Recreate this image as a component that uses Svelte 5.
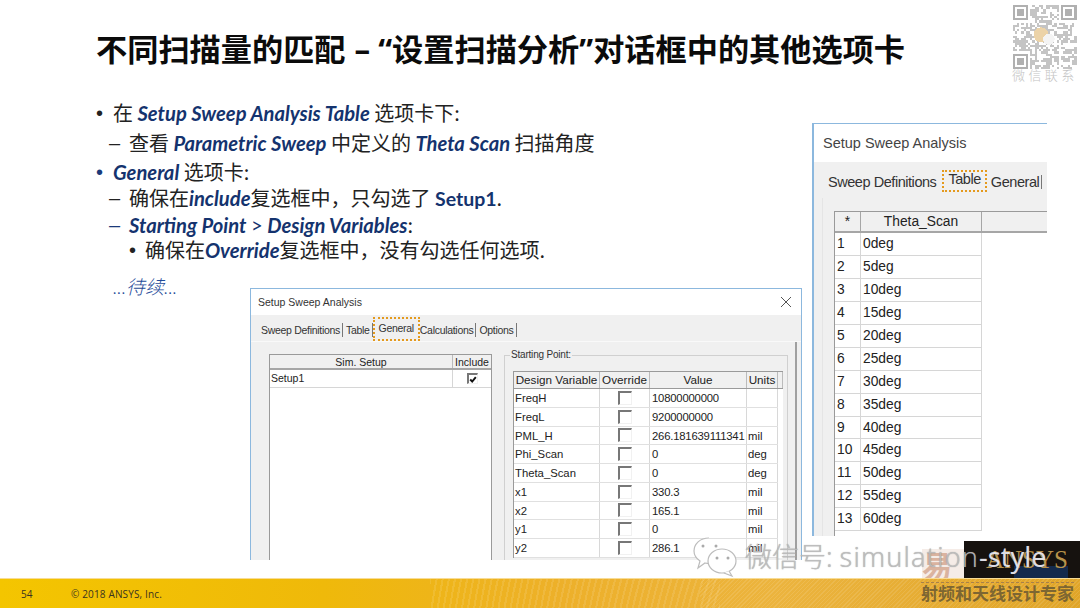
<script>
  const leftRows = [
    ['FreqH', '10800000000', ''],
    ['FreqL', '9200000000', ''],
    ['PML_H', '266.181639111341', 'mil'],
    ['Phi_Scan', '0', 'deg'],
    ['Theta_Scan', '0', 'deg'],
    ['x1', '330.3', 'mil'],
    ['x2', '165.1', 'mil'],
    ['y1', '0', 'mil'],
    ['y2', '286.1', 'mil']
  ];
  const angles = Array.from({ length: 13 }, (_, i) => ({ n: i + 1, a: i * 5 + 'deg' }));

  const QR = 29;
  const qrCells = [];
  let seed = 7;
  const rnd = () => ((seed = (seed * 16807) % 2147483647) / 2147483647);
  for (let y = 0; y < QR; y++) {
    for (let x = 0; x < QR; x++) {
      const inFinder = (x < 8 && y < 8) || (x >= QR - 8 && y < 8) || (x < 8 && y >= QR - 8);
      if (!inFinder && rnd() > 0.5) qrCells.push([x, y]);
    }
  }
  const finders = [[0, 0], [QR - 7, 0], [0, QR - 7]];
</script>

<div class="slide">
  <h1 class="title">不同扫描量的匹配<span class="lat gap">– “</span>设置扫描分析<span class="lat">”</span>对话框中的其他选项卡</h1>

  <div class="qr">
    <svg viewBox="0 0 29 29" width="65" height="64" shape-rendering="crispEdges">
      {#each qrCells as c}<rect x={c[0]} y={c[1]} width="1" height="1" fill="#c4c4c4" />{/each}
      {#each finders as f}
        <rect x={f[0] + 0.5} y={f[1] + 0.5} width="6" height="6" fill="none" stroke="#b0b0b0" />
        <rect x={f[0] + 2} y={f[1] + 2} width="3" height="3" fill="#b0b0b0" />
      {/each}
      <circle cx="13" cy="13.5" r="3.4" fill="#ecd3a8" />
      <circle cx="16.5" cy="15.5" r="2.6" fill="#f4f4f4" />
    </svg>
    <div class="qr-label">微信联系</div>
  </div>

  <ul class="bullets">
    <li class="l1"><span class="mark">•</span><span>在 <em>Setup Sweep Analysis Table</em> 选项卡下:</span></li>
    <li class="l2 g1"><span class="mark">–</span><span>查看 <em>Parametric Sweep</em> 中定义的 <em>Theta Scan</em> 扫描角度</span></li>
    <li class="l1 g2"><span class="mark blue">•</span><span><em>General</em> 选项卡:</span></li>
    <li class="l2"><span class="mark">–</span><span>确保在<em>include</em>复选框中，只勾选了 <b>Setup1</b>.</span></li>
    <li class="l2 g3"><span class="mark blue">–</span><span><em>Starting Point</em> <i class="gt">&gt;</i> <em>Design Variables</em>:</span></li>
    <li class="l3 g4"><span class="mark">•</span><span>确保在<em>Override</em>复选框中，没有勾选任何选项.</span></li>
  </ul>
  <div class="more"><span class="dots">...</span>待续<span class="dots">...</span></div>

  <section class="win win-left">
    <header class="win-title">
      <span>Setup Sweep Analysis</span>
      <svg class="close" viewBox="0 0 10 10" width="10" height="10"><path d="M0 0L10 10M10 0L0 10" stroke="#555" stroke-width="1" fill="none" /></svg>
    </header>
    <div class="win-body">
      <nav class="tabs">
        <span class="tab sep">Sweep Definitions</span>
        <span class="tab sep">Table</span>
        <span class="tab active">General</span>
        <span class="tab sep">Calculations</span>
        <span class="tab sep">Options</span>
      </nav>
      <div class="panel">
        <div class="sim">
          <div class="sim-head"><span class="sim-a">Sim. Setup</span><span class="sim-b">Include</span></div>
          <div class="sim-row">
            <span class="sim-a left">Setup1</span>
            <span class="sim-b"><span class="cb checked"><svg viewBox="0 0 10 10" width="9" height="9"><path d="M1.5 5L4 7.5L8.5 2" stroke="#111" stroke-width="2.4" fill="none" /></svg></span></span>
          </div>
        </div>
        <fieldset class="group">
          <legend>Starting Point:</legend>
          <div class="vars">
            <div class="vhead">
              <span class="c1">Design Variable</span><span class="c2">Override</span><span class="c3">Value</span><span class="c4">Units</span><span class="c5"></span>
            </div>
            {#each leftRows as r}
              <div class="vrow">
                <span class="c1 tl">{r[0]}</span>
                <span class="c2"><span class="cb"></span></span>
                <span class="c3 tl">{r[1]}</span>
                <span class="c4 tl">{r[2]}</span>
              </div>
            {/each}
          </div>
        </fieldset>
      </div>
    </div>
  </section>

  <section class="win win-right">
    <header class="win-title big"><span>Setup Sweep Analysis</span></header>
    <div class="win-body big">
      <nav class="tabs big">
        <span class="tab">Sweep Definitions</span>
        <span class="tab active">Table</span>
        <span class="tab sep">General</span>
      </nav>
      <div class="panel big">
        <div class="angles">
          <div class="ahead"><span class="a1">*</span><span class="a2">Theta_Scan</span><span class="a3"></span></div>
          {#each angles as r}
            <div class="arow"><span class="a1">{r.n}</span><span class="a2">{r.a}</span></div>
          {/each}
        </div>
      </div>
    </div>
  </section>

  <footer class="foot">
    <span class="page">54</span>
    <span class="copy">© 2018 ANSYS, Inc.</span>
    <span class="pro">射频和天线设计专家</span>
  </footer>

  <div class="logo"><span>ANSYS</span></div>

  <div class="stamp">易</div>

  <div class="wm">
    <svg class="wx" viewBox="0 0 48 44" width="48" height="44">
      <path d="M17 3C8 3 2 9 2 16c0 5 3 8 6 10l-2 7 7-5c2 .5 3 .5 5 .5" fill="#fff" stroke="#bcbcbc" stroke-width="1.2" />
      <ellipse cx="30" cy="26" rx="14" ry="12" fill="#fff" stroke="#bcbcbc" stroke-width="1.2" />
      <path d="M37 36l3 5-8-3" fill="#fff" stroke="#bcbcbc" stroke-width="1.2" />
      <circle cx="11" cy="11" r="1.5" fill="#aaa" /><circle cx="24" cy="11" r="1.5" fill="#aaa" />
      <circle cx="25" cy="23" r="1.5" fill="#aaa" /><circle cx="36" cy="23" r="1.5" fill="#aaa" />
    </svg>
    <span class="wm-text">微信号: <span class="wm-lat">simulation</span><span class="wm-light">-style</span></span>
  </div>
</div>

<style>
  :global(body) { margin: 0; }
  .slide {
    position: relative;
    width: 1080px;
    height: 608px;
    overflow: hidden;
    background: #fff;
    font-family: "Noto Sans CJK SC", sans-serif;
    color: #222;
  }
  .title {
    margin: 0;
    padding: 27px 0 0 96px;
    font-size: 31.2px;
    line-height: 42px;
    font-weight: 700;
    color: #0b0b0b;
    white-space: pre;
  }
  .lat { font-family: "Noto Sans", sans-serif; }
  .gap { margin-left: 9px; }
  .bullets {
    list-style: none;
    margin: 0;
    padding: 30px 0 0 96px;
    font-size: 20px;
    line-height: 26px;
  }
  .bullets li { display: flex; white-space: nowrap; height: 26px; }
  .l2 { padding-left: 13px; }
  .l3 { padding-left: 33px; }
  .g1 { margin-top: 4px; }
  .g2 { margin-top: 3px; }
  .g3 { margin-top: 1px; }
  .g4 { margin-top: -1px; }
  .mark { width: 17px; flex: none; color: #222; font-family: "Liberation Sans", sans-serif; }
  .l2 .mark { width: 20px; }
  .l3 .mark { width: 16px; }
  .mark.blue { color: #1b3a7a; }
  .bullets em, .bullets b, .gt {
    font-family: Lato, "Noto Sans", sans-serif;
    color: #14336e;
    font-weight: 700;
    font-size: 20.2px;
  }
  .bullets b { font-size: 19.5px; }
  .bullets em { font-style: italic; }
  .gt { font-style: normal; font-weight: 400; }
  .more {
    margin: 10px 0 0 113px;
    font-size: 19px;
    line-height: 26px;
    font-style: italic;
    color: #1f4b99;
    font-weight: 300;
  }
  .dots { font-family: Lato, sans-serif; }

  .qr { position: absolute; left: 1012px; top: 5px; width: 66px; }
  .qr svg { display: block; filter: blur(0.5px); }
  .qr-label {
    margin-top: -2px;
    font-size: 13px;
    line-height: 15px;
    letter-spacing: 3.4px;
    font-weight: 300;
    color: #c4c4c4;
    white-space: nowrap;
  }

  .win {
    position: absolute;
    overflow: hidden;
    background: #f0f0f0;
    font-family: "Liberation Sans", sans-serif;
    color: #222;
  }
  .win-left {
    left: 250px; top: 288px; width: 552px; height: 272px;
    border: 1px solid #8cb8de;
    border-bottom: 0;
    box-sizing: border-box;
  }
  .win-right {
    left: 812px; top: 123px; width: 235px; height: 413px;
    border: 1px solid #8cb8de;
    border-width: 1px 0 0 2px;
    box-sizing: border-box;
  }
  .win-title {
    height: 26px;
    background: #fff;
    display: flex;
    align-items: center;
    justify-content: space-between;
    padding: 0 10px 0 7px;
    font-size: 10.5px;
    color: #333;
  }
  .win-title.big { height: 38px; padding-left: 9px; font-size: 14.5px; color: #444; }
  .tabs {
    display: flex;
    align-items: center;
    height: 22px;
    padding: 4px 0 0 10px;
    font-size: 10.5px;
    letter-spacing: -0.3px;
    color: #333;
  }
  .tabs.big {
    height: 32px;
    padding: 4px 0 0 14px;
    font-size: 14.5px;
    letter-spacing: -0.45px;
  }
  .tab { padding: 0 2px 0 0; white-space: nowrap; line-height: 14px; }
  .tab.sep { border-right: 1px solid #777; padding-right: 2px; margin-right: 3px; }
  .tabs .tab.active {
    border: 2.5px dotted #e49a1e;
    padding: 2px 4px 4px;
    margin: -3px 0 0 -3px;
  }
  .tabs.big .tab.active { padding: 0 4px 3px; margin: -3px 4px 0 6px; line-height: 15px; }
  .tabs.big .tab { padding-right: 0; }
  .tabs.big .tab.sep { padding-right: 2px; }
  .panel {
    display: flex;
    align-items: flex-start;
    gap: 12px;
    padding: 12px 0 0 18px;
    height: 230px;
    box-sizing: border-box;
    border-top: 1px solid #f9f9f9;
    position: relative;
  }
  .panel.big {
    display: block;
    padding: 13px 0 0 11px;
    height: 345px;
    border: 0;
    border-left: 1px solid #e5e5e5;
    margin-left: 8px;
  }
  .sim {
    width: 223px;
    height: 214px;
    flex: none;
    background: #fff;
    border: 1px solid #9a9a9a;
    box-sizing: border-box;
    font-size: 10.5px;
  }
  .sim-head, .sim-row { display: flex; }
  .sim-head {
    height: 15px; line-height: 14px; background: #f0f0f0; border-bottom: 2px solid #a6a6a6; box-sizing: border-box;
    text-align: center;
  }
  .sim-row { height: 17px; line-height: 16px; border-bottom: 1px solid #d6d6d6; }
  .sim-a { flex: 1; border-right: 1px solid #bbb; }
  .sim-a.left { padding-left: 1px; border-right-color: #d6d6d6; }
  .sim-b { width: 38px; display: flex; justify-content: center; align-items: center; }
  .cb {
    display: inline-flex;
    width: 13px;
    height: 13px;
    box-sizing: border-box;
    border: 1px solid #f1f1f1;
    border-top: 2px solid #777;
    border-left: 2px solid #777;
    background: #fff;
    align-items: center;
    justify-content: center;
  }
  .cb.checked { width: 11px; height: 11px; }
  .group {
    margin: -4px 0 0;
    width: 284px;
    height: 226px;
    box-sizing: border-box;
    border: 1px solid #d0d0d0;
    padding: 9px 0 0 8px;
    flex: none;
  }
  .group legend { font-size: 10px; letter-spacing: -0.2px; line-height: 10px; padding: 0 1px; margin-left: -3px; color: #333; }
  .vars { width: 269px; background: #fff; border-left: 1px solid #9a9a9a; font-size: 11.3px; }
  .vhead, .vrow { display: flex; align-items: stretch; }
  .vhead {
    height: 18px;
    line-height: 16px;
    font-size: 11.7px;
    background: #f0f0f0;
    text-align: center;
    border-top: 1px solid #9a9a9a;
    border-bottom: 1px solid #9a9a9a;
    box-sizing: border-box;
    margin-top: 2px;
  }
  .vhead span { border-right: 1px solid #bbb; box-sizing: border-box; }
  .vrow { height: 18.75px; line-height: 18px; border-bottom: 1px solid #e0e0e0; box-sizing: border-box; width: 264px; }
  .vrow span { border-right: 1px solid #d8d8d8; box-sizing: border-box; }
  .c1 { width: 86px; flex: none; white-space: nowrap; }
  .c2 { width: 50px; flex: none; display: flex; justify-content: center; align-items: center; white-space: nowrap; }
  .vrow .c2 .cb { border-right: 1px solid #f1f1f1; height: 14px; width: 14px; border-top-color: #777; border-left-color: #777; }
  .c3 { width: 97px; flex: none; white-space: nowrap; letter-spacing: -0.2px; }
  .vhead .c3 { letter-spacing: 0; }
  .c4 { width: 31px; flex: none; white-space: nowrap; }
  .c5 { width: 5px; flex: none; }
  .tl { padding-left: 1px; }
  .c3.tl { padding-left: 2px; }
  .c4.tl { padding-left: 1px; }
  .win-left .panel::after {
    content: "";
    position: absolute;
    right: 4px;
    top: 0;
    bottom: 0;
    border-right: 2px solid #a0a0a0;
  }
  .angles { background: #fff; height: 325px; border-left: 1px solid #9a9a9a; font-size: 13.8px; }
  .ahead { display: flex; height: 22px; line-height: 20px; background: #f0f0f0; border-top: 1px solid #9a9a9a; border-bottom: 2px solid #a6a6a6; text-align: center; box-sizing: border-box; }
  .ahead span { border-right: 1px solid #a6a6a6; box-sizing: border-box; }
  .arow { display: flex; height: 22.95px; line-height: 22px; width: 147px; border-bottom: 1px solid #d6d6d6; box-sizing: border-box; }
  .arow span { border-right: 1px solid #d6d6d6; box-sizing: border-box; padding-left: 2px; }
  .a1 { width: 26px; flex: none; }
  .a2 { width: 121px; flex: none; }
  .a3 { flex: 1; border-right: 0 !important; }

  .foot {
    position: absolute;
    left: 0; right: 0; bottom: 0;
    height: 30px;
    background:
      repeating-linear-gradient(135deg, rgba(255,255,255,0.10) 0 1px, rgba(255,255,255,0) 1px 3px) 700px 0 / 380px 100% no-repeat,
      repeating-radial-gradient(circle at 620px 120px, rgba(255,255,255,0.10) 0 2px, rgba(255,255,255,0) 2px 6px) 430px 0 / 290px 100% no-repeat,
      linear-gradient(90deg, #f4c500 0%, #efb90a 30%, #edb02a 52%, #ecb43e 72%, #e0a528 100%);
    border-top: 1px solid #f8dc94;
    box-sizing: border-box;
    display: flex;
    align-items: center;
    font-family: "Open Sans", sans-serif;
    font-size: 10px;
    color: #3a3320;
  }
  .page { margin-left: 21px; width: 50px; }
  .copy { letter-spacing: 0.15px; }
  .pro {
    position: absolute;
    left: 921px;
    top: 4px;
    font-family: "Noto Sans CJK SC", sans-serif;
    font-size: 17px;
    line-height: 20px;
    font-weight: 700;
    color: #7d6632;
    white-space: nowrap;
  }
  .pro::before {
    content: "";
    position: absolute;
    left: 0;
    right: 0;
    top: -1px;
    border-top: 1px dashed #a8814a;
  }
  .logo {
    position: absolute;
    left: 964px; top: 541px;
    width: 116px; height: 37px;
    background: linear-gradient(90deg, #16120f 0 50px, #142a4c 50px 104px, #16120f 104px) 0 100% / 100% 12px no-repeat, #16120f;
    display: flex;
    align-items: center;
    justify-content: flex-end;
    padding-right: 12px;
    box-sizing: border-box;
    font-family: "Liberation Serif", serif;
    font-size: 25px;
    color: #b8924a;
  }
  .wm {
    position: absolute;
    left: 692px; top: 535px;
    display: flex;
    align-items: center;
    gap: 5px;
    white-space: nowrap;
  }
  .wx { display: block; }
  .wm-text {
    font-family: "Noto Sans", "Noto Sans CJK SC", sans-serif;
    font-size: 27px;
    line-height: 44px;
    font-weight: 300;
    color: rgba(190, 190, 190, 0.9);
    text-shadow: 0 0 1px rgba(110, 110, 110, 0.6);
  }
  .wm-lat { letter-spacing: 1.2px; }
  .wm-light { color: rgba(240, 240, 245, 0.92); font-weight: 400; text-shadow: 0 0 1px rgba(60, 60, 80, 0.7); }
  .stamp {
    position: absolute;
    left: 922px; top: 549px;
    width: 42px;
    height: 29px;
    overflow: hidden;
    background: rgba(225, 200, 185, 0.35);
    font-size: 30px;
    line-height: 30px;
    font-weight: 700;
    color: rgba(210, 160, 135, 0.75);
  }
</style>
